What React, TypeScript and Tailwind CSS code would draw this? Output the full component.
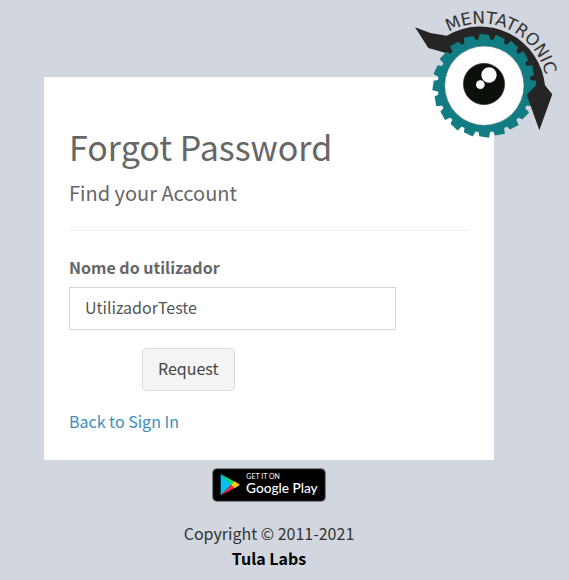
const TEETH = Array.from({ length: 20 }, (_, index) => index * 18);

const MentatronicLogo = () => (
  <svg viewBox="0 0 492 435" className="h-[145px] w-[164px]" role="img" aria-label="Mentatronic">
    <defs>
      <path id="logo-arc" d="M131 96 A197 197 0 0 1 425 280" />
    </defs>
    <path d="M30 82 L76 99 L125 107 A196 196 0 0 1 420 256 L388 300 L120 158 L70 144 Z" fill="#252525" />
    <circle cx="238" cy="257" r="140" fill="#117c82" />
    {TEETH.map((angle) => (
      <path key={angle} d="M102 239 L86 242 L82 271 L102 275 Z" fill="#117c82" transform={`rotate(${angle} 238 257)`} />
    ))}
    <circle cx="238" cy="257" r="119" fill="#fff" stroke="#4b777a" strokeWidth="2" />
    <circle cx="237" cy="252" r="62" fill="#0b100b" stroke="#3b403b" strokeWidth="2" />
    <circle cx="252" cy="225" r="23" fill="#fff" />
    <circle cx="226" cy="254" r="13" fill="#fff" />
    <path d="M393 256 L420 256 L442 283 L403 391 L365 284 Z" fill="#252525" />
    <text fontSize="51" fill="#333" fontFamily="DejaVu Sans, sans-serif">
      <textPath href="#logo-arc">MENTATRONIC</textPath>
    </text>
  </svg>
);

const GooglePlayBadge = () => (
  <svg viewBox="0 0 342 102" className="h-[34px] w-[114px]" role="img" aria-label="Get it on Google Play">
    <rect x="2" y="2" width="338" height="98" rx="12" fill="#000" stroke="#777" strokeWidth="3" />
    <path d="M26 18 L58 50 L26 82 Z" fill="#00c3f5" />
    <path d="M26 18 L68 41 L58 51 Z" fill="#00df76" />
    <path d="M26 82 L58 50 L68 60 Z" fill="#f33148" />
    <path d="M68 40 L84 50 L68 61 L57 50 Z" fill="#ffc900" />
    <text x="103" y="32" fontSize="21" fill="#fff" fontFamily="Lato, sans-serif">
      GET IT ON
    </text>
    <text x="102" y="75" fontSize="41" fontWeight="500" fill="#fff" fontFamily="Lato, sans-serif">
      Google Play
    </text>
  </svg>
);

export default function App() {
  return (
    <div className="relative min-h-screen bg-[#d2d6de] pt-[77px] pr-[31px] font-['Noto_Sans_CJK_SC',sans-serif] text-[16px] leading-[25px] text-[#333]">
      <div className="absolute top-0 right-0">
        <MentatronicLogo />
      </div>

      <main className="mx-auto max-w-[450px] bg-white p-[25px] text-[#666]">
        <h1 className="mt-[23px] text-[34px] leading-[44px]">Forgot Password</h1>
        <h2 className="mt-[11px] text-[20px] leading-[25px]">Find your Account</h2>
        <hr className="mt-[25px] mb-6 border-[#eee]" />

        <form onSubmit={(event) => event.preventDefault()}>
          <label htmlFor="username" className="block font-bold">
            Nome do utilizador
          </label>
          <input
            id="username"
            type="text"
            defaultValue="UtilizadorTeste"
            className="mt-[7px] block h-[43px] w-[327px] max-w-full border border-[#d2d6de] px-[15px] pb-[3px] text-[#555] outline-none"
          />
          <button
            type="submit"
            className="mt-[18px] ml-[73px] block h-[43px] rounded-[4px] border border-[#ddd] bg-[#f4f4f4] px-[15px] pb-[2px] text-[#444]"
          >
            Request
          </button>
        </form>

        <a href="#signin" className="mt-[18px] mb-px block w-fit text-[#3c8dbc]">
          Back to Sign In
        </a>
      </main>

      <footer className="flex flex-col items-center pt-2 text-center">
        <a href="#google-play">
          <GooglePlayBadge />
        </a>
        <p className="mt-[19px]">Copyright © 2011-2021</p>
        <p className="font-bold text-black">Tula Labs</p>
      </footer>
    </div>
  );
}
